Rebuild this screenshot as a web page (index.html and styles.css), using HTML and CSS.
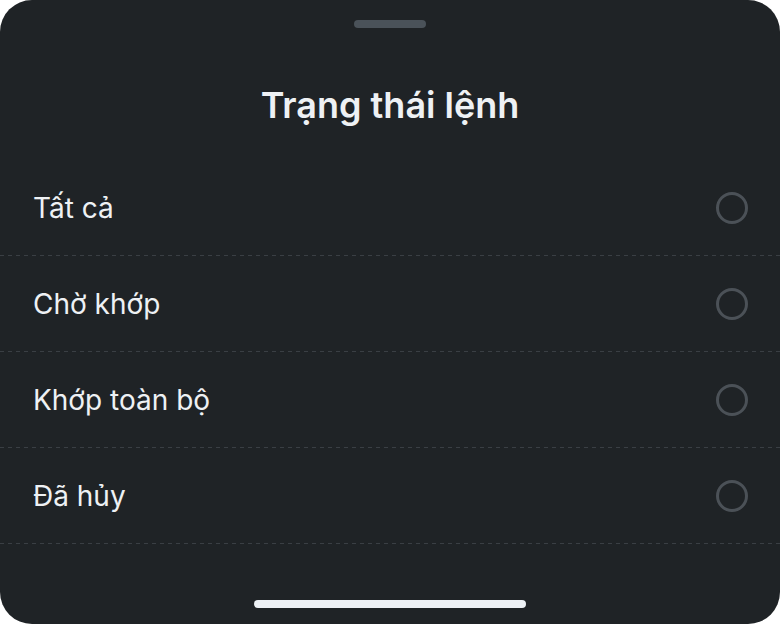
FILE: index.html
```html
<!DOCTYPE html>
<html lang="vi">
<head>
    <meta charset="UTF-8">
    <meta name="viewport" content="width=device-width, initial-scale=1.0">
    <title>Trạng thái lệnh</title>
    <link rel="stylesheet" href="styles.css">
</head>
<body>
    <div class="sheet">
        <div class="handle"></div>
        <h1 class="sheet-title">Trạng thái lệnh</h1>

        <ul class="option-list">
            <li class="option">
                <span class="option-label">Tất cả</span>
                <span class="radio"></span>
            </li>
            <li class="option">
                <span class="option-label">Chờ khớp</span>
                <span class="radio"></span>
            </li>
            <li class="option">
                <span class="option-label">Khớp toàn bộ</span>
                <span class="radio"></span>
            </li>
            <li class="option">
                <span class="option-label">Đã hủy</span>
                <span class="radio"></span>
            </li>
        </ul>

        <div class="home-indicator"></div>
    </div>
</body>
</html>
```

FILE: styles.css
```css
body {
    margin: 0;
    background: #ffffff;
    font-family: Inter, "Noto Sans", sans-serif;
}

.sheet {
    height: 624px;
    background: #1f2326;
    border-radius: 32px;
    display: flex;
    flex-direction: column;
    overflow: hidden;
}

.handle {
    width: 72px;
    height: 8px;
    margin: 20px auto 0;
    border-radius: 4px;
    background: #4a5259;
}

.sheet-title {
    margin: 56px 0 0;
    height: 40px;
    line-height: 42px;
    text-align: center;
    font-size: 36px;
    font-weight: 600;
    color: #eef1f4;
}

.option-list {
    list-style: none;
    margin: 36px 0 0;
    padding: 0;
}

.option {
    height: 96px;
    padding: 0 32px 0 33px;
    display: flex;
    align-items: center;
    justify-content: space-between;
    box-sizing: border-box;
    /* dashed divider: 4px dash, 4px gap */
    background-image: repeating-linear-gradient(to right, #3a3f44 0 4px, transparent 4px 8px);
    background-size: 100% 1px;
    background-position: left bottom;
    background-repeat: no-repeat;
}

.option-label {
    font-size: 28px;
    color: #eef1f4;
}

.radio {
    width: 32px;
    height: 32px;
    border: 3px solid #4b5157;
    border-radius: 50%;
    box-sizing: border-box;
}

.home-indicator {
    width: 272px;
    height: 8px;
    margin: auto auto 16px;
    border-radius: 4px;
    background: #edf1f5;
}
```
